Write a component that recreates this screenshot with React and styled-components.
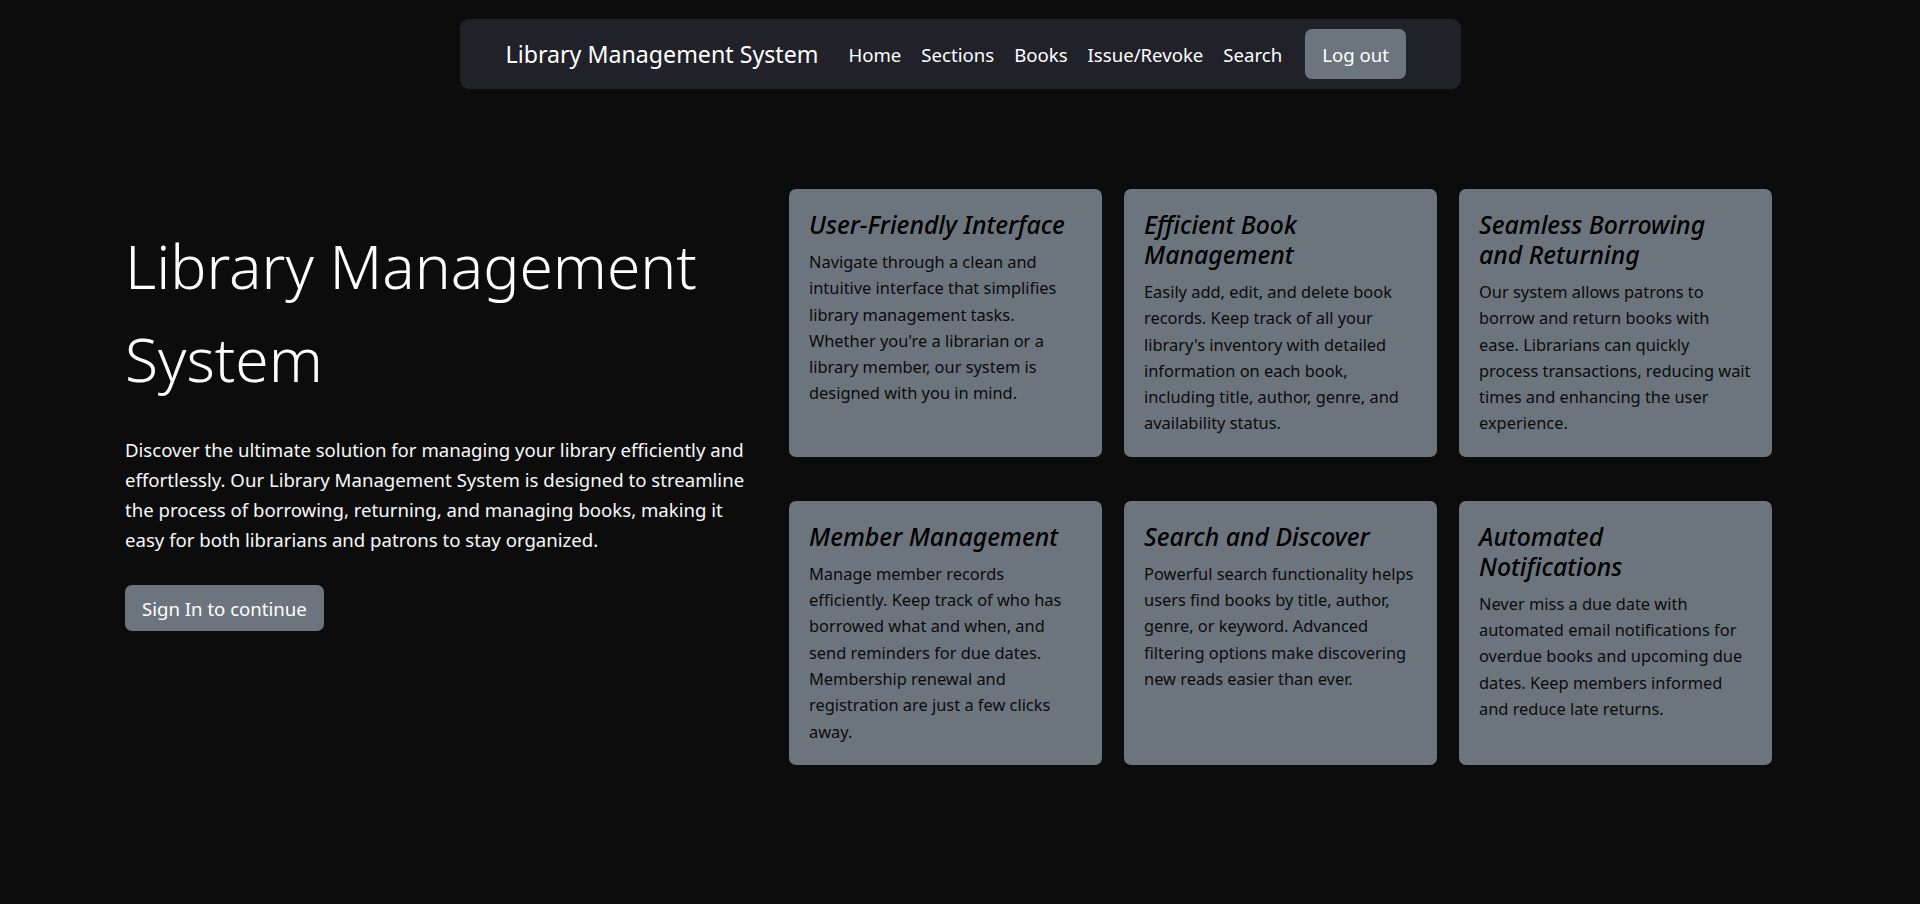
import styled, { createGlobalStyle } from "styled-components";

const GlobalStyle = createGlobalStyle`
  html, body {
    margin: 0;
    padding: 0;
    background: #0c0c0c;
  }
  body {
    font-family: "Segoe UI", "Noto Sans", "Open Sans", sans-serif;
    color: #f8f9fa;
    min-height: 904px;
  }
  * {
    box-sizing: border-box;
  }
`;

const Page = styled.div`
  min-height: 904px;
  padding-top: 19px;
`;

const NavBar = styled.nav`
  width: 1001px;
  height: 70px;
  margin: 0 auto;
  background: #212229;
  border-radius: 9px;
  display: flex;
  align-items: center;
  padding: 0 46px;
`;

const Brand = styled.a`
  font-size: 23.2px;
  color: #fff;
  text-decoration: none;
  margin-right: 20px;
  white-space: nowrap;
`;

const NavLinks = styled.div`
  display: flex;
  align-items: center;
`;

const NavLink = styled.a`
  font-size: 18.6px;
  color: #fff;
  text-decoration: none;
  padding: 0 10px;
  white-space: nowrap;
`;

const Button = styled.button`
  font-family: inherit;
  font-size: 18.6px;
  color: #fff;
  background: #6c757d;
  border: none;
  border-radius: 7px;
  padding: 0 17px;
  height: ${(p) => p.$height}px;
  margin-left: ${(p) => p.$ml || 0}px;
  white-space: nowrap;
  cursor: pointer;
`;

const Hero = styled.main`
  display: flex;
  align-items: flex-start;
  padding: 100px 0 0 125px;
  gap: 34px;
`;

const Intro = styled.section`
  width: 630px;
  padding-top: 30px;
`;

const Title = styled.h1`
  font-size: 60.5px;
  font-weight: 300;
  line-height: 93px;
  margin: 0 0 30px;
  color: #fff;
`;

const Lead = styled.p`
  font-size: 18.6px;
  line-height: 30px;
  margin: 0 0 30px;
`;

const Features = styled.div`
  display: grid;
  grid-template-columns: repeat(3, 313px);
  column-gap: 22px;
  row-gap: 44px;
`;

const Card = styled.article`
  background: #6c757d;
  border-radius: 7px;
  padding: 20px;
  color: #0b0b0b;
`;

const CardTitle = styled.h5`
  font-size: 24.8px;
  font-style: italic;
  font-weight: 500;
  line-height: 30px;
  margin: 0 0 10px;
  padding-right: 6px;
  color: #000;
`;

const CardText = styled.p`
  font-size: 16.4px;
  line-height: 26.3px;
  margin: 0;
`;

const features = [
  {
    title: "User-Friendly Interface",
    text: "Navigate through a clean and intuitive interface that simplifies library management tasks. Whether you're a librarian or a library member, our system is designed with you in mind.",
  },
  {
    title: "Efficient Book Management",
    text: "Easily add, edit, and delete book records. Keep track of all your library's inventory with detailed information on each book, including title, author, genre, and availability status.",
  },
  {
    title: "Seamless Borrowing and Returning",
    text: "Our system allows patrons to borrow and return books with ease. Librarians can quickly process transactions, reducing wait times and enhancing the user experience.",
  },
  {
    title: "Member Management",
    text: "Manage member records efficiently. Keep track of who has borrowed what and when, and send reminders for due dates. Membership renewal and registration are just a few clicks away.",
  },
  {
    title: "Search and Discover",
    text: "Powerful search functionality helps users find books by title, author, genre, or keyword. Advanced filtering options make discovering new reads easier than ever.",
  },
  {
    title: "Automated Notifications",
    text: "Never miss a due date with automated email notifications for overdue books and upcoming due dates. Keep members informed and reduce late returns.",
  },
];

const links = ["Home", "Sections", "Books", "Issue/Revoke", "Search"];

export default function App() {
  return (
    <Page>
      <GlobalStyle />
      <NavBar>
        <Brand href="#">Library Management System</Brand>
        <NavLinks>
          {links.map((l) => (
            <NavLink key={l} href="#">
              {l}
            </NavLink>
          ))}
        </NavLinks>
        <Button $height={50} $ml={13}>
          Log out
        </Button>
      </NavBar>
      <Hero>
        <Intro>
          <Title>Library Management System</Title>
          <Lead>
            Discover the ultimate solution for managing your library
            efficiently and effortlessly. Our Library Management System is
            designed to streamline the process of borrowing, returning, and
            managing books, making it easy for both librarians and patrons to
            stay organized.
          </Lead>
          <Button $height={46}>Sign In to continue</Button>
        </Intro>
        <Features>
          {features.map((f) => (
            <Card key={f.title}>
              <CardTitle>{f.title}</CardTitle>
              <CardText>{f.text}</CardText>
            </Card>
          ))}
        </Features>
      </Hero>
    </Page>
  );
}
